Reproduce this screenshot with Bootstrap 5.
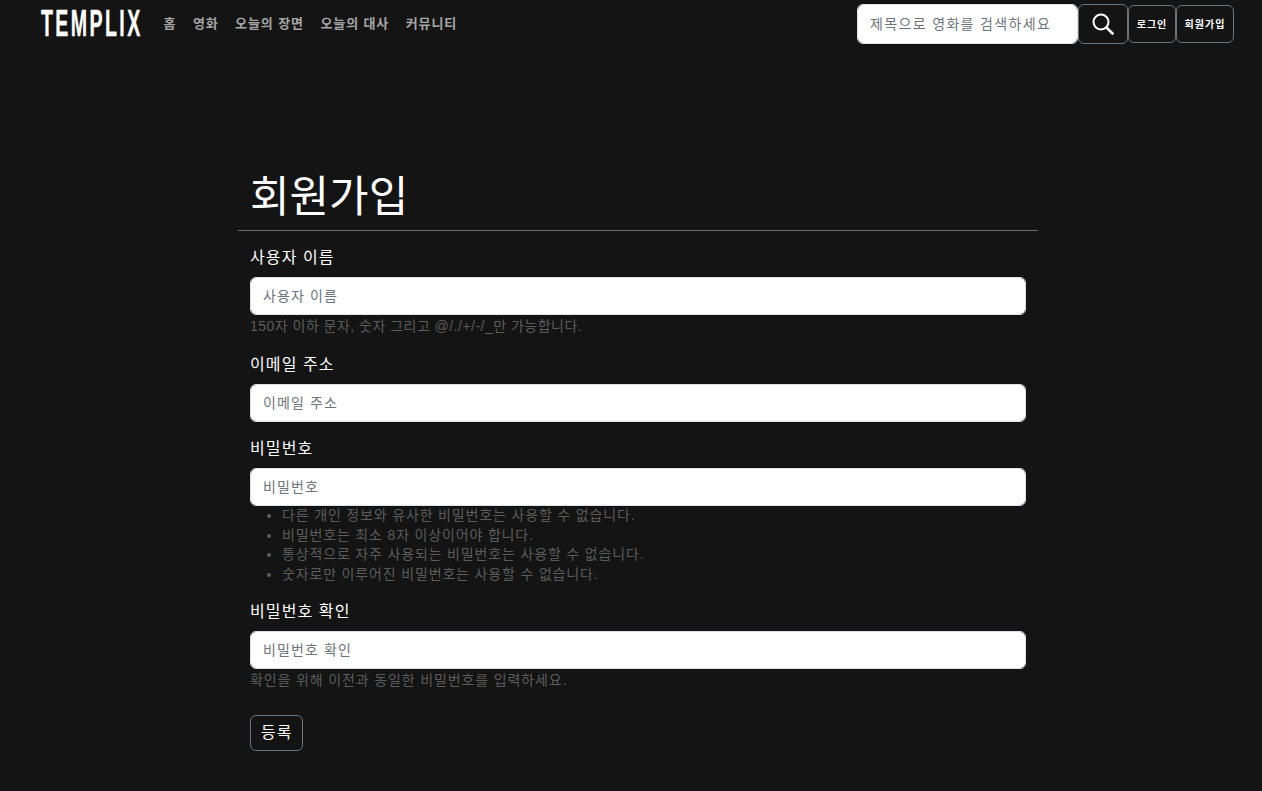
<!doctype html>
<html lang="ko">
<head>
<meta charset="utf-8">
<title>회원가입</title>
<link href="https://cdn.jsdelivr.net/npm/bootstrap@5.3.0/dist/css/bootstrap.min.css" rel="stylesheet">
<style>
body{background:#141414;color:#fff;font-family:"Liberation Sans","Noto Sans CJK KR",sans-serif;height:791px;overflow:hidden}
.top-nav{height:48px;padding:0 28px 0 41px}
.brand-logo{width:100px;height:28px;margin-right:14px;color:#fff;font-family:"Liberation Sans",sans-serif;font-weight:700;font-size:28px;line-height:28px;white-space:nowrap;letter-spacing:3.4px;-webkit-text-stroke:.3px #fff;transform:scale(.7,1.3);transform-origin:left center;text-decoration:none;display:block}
.top-link{color:#a6a6a6;font-size:13px;font-weight:700;padding:0 8px 0 8.5px;letter-spacing:.9px;text-decoration:none}
.search-field{width:221px;height:40px;font-size:14px;padding:6px 12px;letter-spacing:1.35px}
.search-btn{width:50px;height:40px;padding:0;border-color:#6c757d;color:#fff;display:flex;align-items:center;justify-content:center}
.auth-btn{height:38px;padding:0;font-size:10px;font-weight:700;letter-spacing:1px;color:#fff;border-color:#6c757d;display:flex;align-items:center;justify-content:center}
.auth-login{width:48px}
.auth-join{width:58px}
.form-wrap{width:800px;margin:0 0 0 238px;padding-top:119px}
.page-title{font-size:43px;line-height:60px;margin:0;padding:0 12px 3px;font-weight:400}
.title-rule{border:0;border-top:1px solid #6c6c6c;opacity:1;margin:0 0 14px}
.form-area{padding:0 12px}
.field-label{display:block;font-size:16px;line-height:24px;padding-top:1px;margin-bottom:7px;letter-spacing:1.1px}
.field-input{height:38px;font-size:14px;padding:6px 12px;letter-spacing:1.1px}
.field-input::placeholder,.search-field::placeholder{color:#6c757d}
.help-line{color:#5c5c5c;font-size:14px;line-height:23px;letter-spacing:.87px}
.help-first{letter-spacing:.48px}
.help-list{color:#5c5c5c;font-size:14px;line-height:19.5px;padding-left:32px;margin:0;letter-spacing:.84px}
.group-a{margin-bottom:14px}
.group-b{margin-bottom:14px}
.group-c{margin-bottom:15px}
.group-d{margin-bottom:23px}
.submit-btn{height:36px;padding:0 10px;font-size:16px;letter-spacing:1px;color:#fff;border-color:#6c757d;display:block}
</style>
</head>
<body>
<nav class="top-nav d-flex align-items-center justify-content-between">
  <div class="d-flex align-items-center">
    <a class="brand-logo" href="#">TEMPLIX</a>
    <a class="top-link" href="#">홈</a>
    <a class="top-link" href="#">영화</a>
    <a class="top-link" href="#">오늘의 장면</a>
    <a class="top-link" href="#">오늘의 대사</a>
    <a class="top-link" href="#">커뮤니티</a>
  </div>
  <form class="d-flex align-items-center">
    <input class="form-control search-field" type="search" placeholder="제목으로 영화를 검색하세요">
    <button class="btn search-btn" type="button" aria-label="검색">
      <svg width="22" height="22" viewBox="0 0 22 22" fill="none" stroke="#fff" stroke-width="2"><circle cx="9" cy="9" r="7.5"/><path d="M14.5 14.5l6 6" stroke-width="2.6" stroke-linecap="round"/></svg>
    </button>
    <a class="btn auth-btn auth-login" href="#">로그인</a>
    <a class="btn auth-btn auth-join" href="#">회원가입</a>
  </form>
</nav>
<main class="form-wrap">
  <h1 class="page-title">회원가입</h1>
  <hr class="title-rule">
  <form class="form-area">
    <div class="group-a">
      <label class="field-label" for="u">사용자 이름</label>
      <input class="form-control field-input" id="u" placeholder="사용자 이름">
      <div class="help-line help-first">150자 이하 문자, 숫자 그리고 @/./+/-/_만 가능합니다.</div>
    </div>
    <div class="group-b">
      <label class="field-label" for="e">이메일 주소</label>
      <input class="form-control field-input" id="e" placeholder="이메일 주소">
    </div>
    <div class="group-c">
      <label class="field-label" for="p">비밀번호</label>
      <input class="form-control field-input" id="p" placeholder="비밀번호">
      <ul class="help-list">
        <li>다른 개인 정보와 유사한 비밀번호는 사용할 수 없습니다.</li>
        <li>비밀번호는 최소 8자 이상이어야 합니다.</li>
        <li>통상적으로 자주 사용되는 비밀번호는 사용할 수 없습니다.</li>
        <li>숫자로만 이루어진 비밀번호는 사용할 수 없습니다.</li>
      </ul>
    </div>
    <div class="group-d">
      <label class="field-label" for="c">비밀번호 확인</label>
      <input class="form-control field-input" id="c" placeholder="비밀번호 확인">
      <div class="help-line">확인을 위해 이전과 동일한 비밀번호를 입력하세요.</div>
    </div>
    <button class="btn submit-btn" type="button">등록</button>
  </form>
</main>
<script src="https://cdn.jsdelivr.net/npm/bootstrap@5.3.0/dist/js/bootstrap.bundle.min.js"></script>
</body>
</html>
